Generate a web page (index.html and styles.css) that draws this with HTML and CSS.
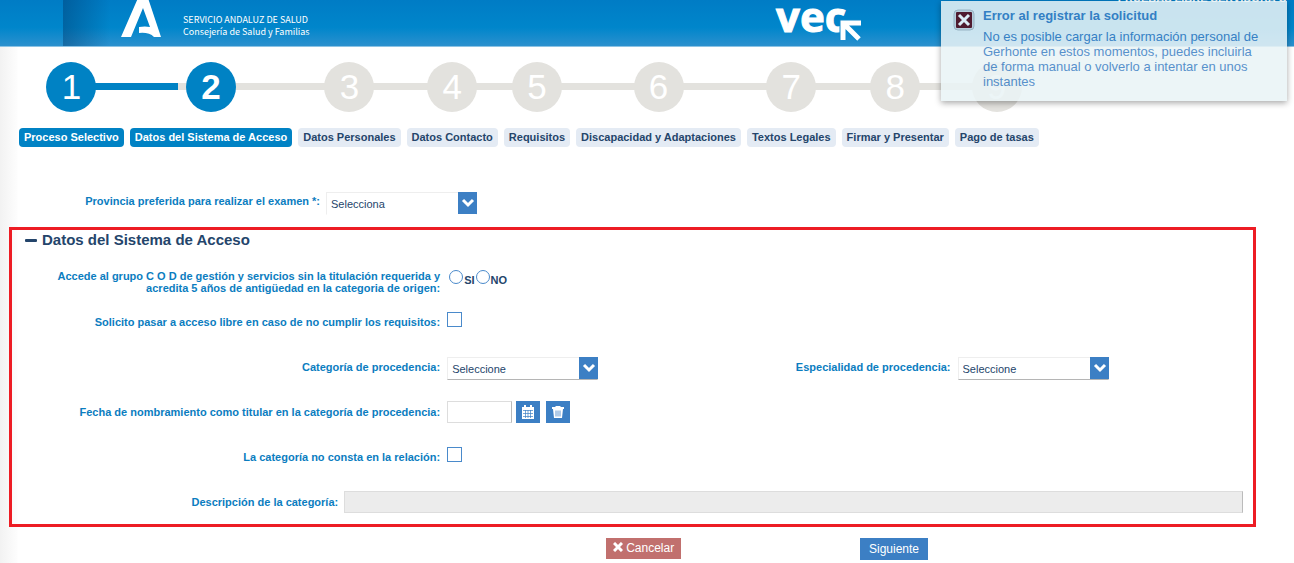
FILE: index.html
```html
<!doctype html>
<html lang="es">

<head>
    <meta charset="UTF-8">
    <title>VEC - Datos del Sistema de Acceso</title>
    <link rel="stylesheet" href="styles.css">
</head>

<body>
    <header class="header">
        <svg class="logo-junta" viewBox="0 0 40 38" width="40" height="38">
            <path d="M0 37 L17 -2 H27 L40 37 H33 Q28 32 18 33 V27 Q24 26 29 27 L22 8 L10 37 Z"/>
        </svg>
        <p class="organismo">SERVICIO ANDALUZ DE SALUD<br>Consejería de Salud y Familias</p>
        <svg class="logo-vec" viewBox="0 0 90 46" width="90" height="46">
            <text x="0" y="32">vec</text>
            <path class="borde" d="M67 40 V23 H85 M68 24 L83 39"/>
            <path d="M67 40 V23 H85 M68 24 L83 39"/>
        </svg>
        <span class="usuario">PRUEBAS LIBRE SERVIDORA O</span>
    </header>

    <main class="contenido">
        <ol class="pasos">
            <li class="hecho"><span class="num">1</span><a href="#">Proceso Selectivo</a></li>
            <li class="actual"><span class="num">2</span><a href="#">Datos del Sistema de Acceso</a></li>
            <li><span class="num">3</span><a href="#">Datos Personales</a></li>
            <li><span class="num">4</span><a href="#">Datos Contacto</a></li>
            <li><span class="num">5</span><a href="#">Requisitos</a></li>
            <li><span class="num">6</span><a href="#">Discapacidad y Adaptaciones</a></li>
            <li><span class="num">7</span><a href="#">Textos Legales</a></li>
            <li><span class="num">8</span><a href="#">Firmar y Presentar</a></li>
            <li><span class="num">9</span><a href="#">Pago de tasas</a></li>
        </ol>

        <form>
            <div class="fila provincia">
                <label for="provincia">Provincia preferida para realizar el examen *:</label>
                <div class="select">
                    <select id="provincia"><option>Selecciona</option></select>
                    <svg viewBox="0 0 19 22"><path d="M5 8 L10 13 L15 8"/></svg>
                </div>
            </div>

            <section class="bloque">
                <h2>Datos del Sistema de Acceso</h2>
                <div class="fila doble" role="radiogroup" aria-labelledby="grupo">
                    <span class="etiqueta" id="grupo">Accede al grupo C O D de gestión y servicios sin la titulación requerida y acredita 5 años de antigüedad en la categoria de origen:</span>
                    <div class="radios">
                        <input type="radio" name="accede" id="si"><label for="si">SI</label>
                        <input type="radio" name="accede" id="no"><label for="no">NO</label>
                    </div>
                </div>
                <div class="fila">
                    <label for="libre">Solicito pasar a acceso libre en caso de no cumplir los requisitos:</label>
                    <input type="checkbox" id="libre">
                </div>
                <div class="fila">
                    <label for="categoria">Categoría de procedencia:</label>
                    <div class="select">
                        <select id="categoria"><option>Seleccione</option></select>
                        <svg viewBox="0 0 19 22"><path d="M5 8 L10 13 L15 8"/></svg>
                    </div>
                    <label for="especialidad">Especialidad de procedencia:</label>
                    <div class="select">
                        <select id="especialidad"><option>Seleccione</option></select>
                        <svg viewBox="0 0 19 22"><path d="M5 8 L10 13 L15 8"/></svg>
                    </div>
                </div>
                <div class="fila">
                    <label for="fecha">Fecha de nombramiento como titular en la categoría de procedencia:</label>
                    <div class="fecha">
                        <input type="text" id="fecha">
                        <button type="button" aria-label="Calendario">
                            <svg viewBox="0 0 14 14" width="14" height="14">
                                <path fill="#fff" d="M1 2h2V0h2v2h4V0h2v2h2v12H1z"/>
                                <path stroke="#3c7fc4" d="M2 5.5h10M2 8.5h10M2 11.5h10M4.5 5v8M7 5v8M9.5 5v8" stroke-width=".7"/>
                            </svg>
                        </button>
                        <button type="button" aria-label="Borrar">
                            <svg viewBox="0 0 14 14" width="14" height="14">
                                <path fill="#fff" d="M5 1h4l1 1h3v2H1V2h3zM2 4h10l-1 9H3z"/>
                                <path stroke="#3c7fc4" d="M5 5.5v6M7 5.5v6M9 5.5v6" stroke-width=".8"/>
                            </svg>
                        </button>
                    </div>
                </div>
                <div class="fila">
                    <label for="noconsta">La categoría no consta en la relación:</label>
                    <input type="checkbox" id="noconsta">
                </div>
                <div class="fila descripcion">
                    <label for="descripcion">Descripción de la categoría:</label>
                    <input type="text" id="descripcion" disabled>
                </div>
            </section>

            <div class="botones">
                <button type="button" class="cancelar">
                    <svg viewBox="0 0 10 10" width="10" height="10"><path d="M1 1 L9 9 M9 1 L1 9"/></svg>
                    Cancelar
                </button>
                <button type="submit" class="siguiente">Siguiente</button>
            </div>
        </form>
    </main>

    <!-- aviso de error -->
    <div class="aviso" role="alert">
        <svg viewBox="0 0 22 22" width="22" height="22">
            <rect x="1" y="1" width="20" height="20" rx="4" fill="#d3dbe0" stroke="#b0bcc4"/>
            <rect x="3" y="3" width="16" height="16" rx="1" fill="#5c0a16"/>
            <path d="M6 6 L16 16 M16 6 L6 16" stroke="#fff" stroke-width="3"/>
        </svg>
        <div>
            <h3>Error al registrar la solicitud</h3>
            <p>No es posible cargar la información personal de Gerhonte en estos momentos, puedes incluirla de forma manual o volverlo a intentar en unos instantes</p>
        </div>
    </div>
</body>

</html>
```
FILE: styles.css
```css
* {
    box-sizing: border-box;
    margin: 0;
    padding: 0;
}

body {
    font-family: "Liberation Sans", Arial, sans-serif;
    font-size: 11px;
    color: #24456b;
    background: linear-gradient(to right, #f2f2f2, #fdfdfd 17px, #fff 18px);
    position: relative;
}

/* cabecera */
.header {
    height: 47px;
    padding-left: 121px;
    display: flex;
    overflow: hidden;
    position: relative;
    border-bottom: 1px solid #8cc3e4;
    background:
        linear-gradient(to right, transparent 63px, rgba(0, 50, 100, .4) 63px, transparent 110px),
        linear-gradient(#007cc5, #0086cb 60%, #2b90ce);
}

.logo-junta {
    fill: #fff;
}

.organismo {
    font-family: "Noto Sans CJK SC", sans-serif;
    font-size: 9px;
    line-height: 12px;
    color: #fff;
    margin: 14px 0 0 22px;
    white-space: nowrap;
}

.logo-vec {
    position: absolute;
    left: 60%;
    top: 0;
    overflow: visible;
}

.logo-vec text {
    font-family: "Open Sans", sans-serif;
    font-weight: bold;
    font-size: 42px;
    fill: #fff;
    stroke: #fff;
    stroke-width: 1px;
}

.logo-vec path {
    fill: none;
    stroke: #fff;
    stroke-width: 5px;
}

.logo-vec .borde {
    stroke: #0e87ca;
    stroke-width: 7px;
}

.usuario {
    position: absolute;
    top: -9px;
    right: 7px;
    font-size: 11px;
    line-height: 14px;
    font-weight: bold;
    color: #fff;
}

/* pasos */
.pasos {
    display: flex;
    gap: 6px;
    list-style: none;
    padding: 15px 19px 0;
}

.pasos li {
    position: relative;
    text-align: center;
}

.pasos li::before {
    content: "";
    position: absolute;
    left: -6px;
    right: 0;
    top: 21px;
    height: 7px;
    background: #e3e2de;
}

.pasos li:first-child::before {
    left: 50%;
}

.pasos li:last-child::before {
    right: 50%;
}

.pasos .hecho::before {
    background: #0082c4;
}

.pasos .actual::before {
    background: linear-gradient(to right, #0082c4 32%, #e3e2de 32%);
}

.num {
    position: relative;
    display: block;
    width: 50px;
    height: 50px;
    margin: 0 auto 16px;
    border-radius: 50%;
    background: #e3e2de;
    color: #fff;
    font-size: 35px;
    line-height: 50px;
}

.actual .num {
    font-weight: bold;
}

.pasos a {
    display: block;
    padding: 0 5px;
    border-radius: 4px;
    line-height: 19px;
    font-weight: bold;
    color: #24456b;
    background: #e4ebf4;
    text-decoration: none;
    white-space: nowrap;
}

.hecho .num,
.actual .num,
.pasos .hecho a,
.pasos .actual a {
    background: #0082c4;
    color: #fff;
}

/* formulario */
.fila {
    display: grid;
    grid-template-columns: 34.5% 16% 24% 1fr;
    gap: 7px;
    align-items: center;
    height: 45px;
}

.fila > label,
.etiqueta {
    text-align: right;
    font-weight: bold;
    line-height: 12px;
    color: #0b7dbf;
}

.provincia {
    grid-template-columns: 320px 1fr;
    gap: 6px;
    margin-top: 32px;
    height: 48px;
}

.provincia label {
    padding-bottom: 4px;
}

.bloque {
    border: 3px solid #ed1c24;
    margin: 0 38px 0 9px;
}

h2 {
    font-size: 15px;
    line-height: 20px;
    display: flex;
    align-items: center;
    gap: 5px;
    margin: 0 0 14px 13px;
}

h2::before {
    content: "";
    width: 12px;
    height: 3px;
    border-radius: 1px;
    background: #24456b;
}

.doble {
    height: 35px;
}

.etiqueta {
    padding-left: 40px;
}

.descripcion {
    grid-template-columns: 26.5% 1fr;
    gap: 6px;
    padding-right: 10px;
}

input[type="radio"],
input[type="checkbox"] {
    appearance: none;
    width: 15px;
    height: 15px;
    border: 1px solid #4a8acb;
    background: #fff;
}

input[type="checkbox"] {
    margin-bottom: 4px;
}

input[type="radio"] {
    width: 14px;
    height: 14px;
    border-radius: 50%;
}

.radios {
    display: flex;
    align-items: flex-end;
    gap: 1px;
    padding: 0 0 10px 2px;
    font-weight: bold;
    line-height: 7px;
}

.select {
    position: relative;
    width: 151px;
    height: 23px;
}

.bloque .select {
    margin-top: 3px;
}

.select select {
    appearance: none;
    width: 100%;
    height: 100%;
    padding: 2px 4px 0;
    border: 1px solid #eee;
    border-bottom-color: #b5b5b5;
    border-radius: 0;
    background: #fff;
    font: inherit;
    color: #24456b;
}

.provincia select {
    border-bottom-color: #fff;
}

.select svg {
    position: absolute;
    top: 0;
    right: 0;
    width: 19px;
    height: 22px;
    background: #3c7fc4;
    fill: none;
    stroke: #fff;
    stroke-width: 3px;
    pointer-events: none;
}

input[type="text"] {
    width: 100%;
    height: 22px;
    border: 1px solid #ddd;
    border-right-color: #bbb;
    background: #fff;
}

input[type="text"]:disabled {
    background: #ececec;
}

.fecha {
    display: flex;
    gap: 4px;
}

.fecha input[type="text"] {
    width: 65px;
}

.fecha button {
    width: 24px;
    height: 22px;
    display: flex;
    align-items: center;
    justify-content: center;
    margin-right: 2px;
}

button {
    border: 0;
    font: 12px/22px "Liberation Sans", Arial, sans-serif;
    color: #fff;
    background: #3c7fc4;
}

.botones {
    display: flex;
    gap: 179px;
    padding: 11px 0 3px 606px;
}

.cancelar {
    width: 75px;
    height: 21px;
    line-height: 21px;
    background: #c1706e;
}

.cancelar svg {
    fill: none;
    stroke: #fff;
    stroke-width: 3px;
}

.siguiente {
    width: 68px;
    height: 22px;
}

/* aviso */
.aviso {
    position: absolute;
    top: 1px;
    right: 7px;
    width: 346px;
    height: 100px;
    padding: 7px 22px 7px 12px;
    display: flex;
    gap: 8px;
    background: #eaf4f6;
    color: #3c7fc4;
    opacity: .86;
    box-shadow: 0 2px 6px rgba(0, 0, 0, .4);
}

.aviso svg {
    flex: none;
    margin-top: 1px;
}

.aviso h3 {
    font-size: 13px;
    line-height: 15px;
    margin-bottom: 6px;
}

.aviso p {
    font-size: 13px;
    line-height: 15px;
}
```
